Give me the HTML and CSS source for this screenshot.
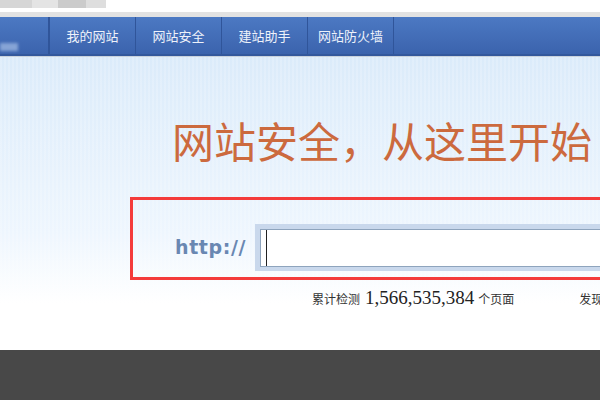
FILE: index.html
```html
<html>
<head>
	<meta charset="utf-8">
	<title>网站安全</title>
	<link rel="stylesheet" href="styles.css">
</head>
<body>
	<div class="top-strip">
		<div class="blur-blocks">
			<span class="bb bb1"></span><span class="bb bb2"></span><span class="bb bb3"></span><span class="bb bb4"></span>
		</div>
	</div>
	<div class="nav">
		<div class="nav-logo"><span class="logo-glow"></span></div>
		<a class="nav-item">我的网站</a>
		<a class="nav-item">网站安全</a>
		<a class="nav-item">建站助手</a>
		<a class="nav-item">网站防火墙</a>
	</div>
	<div class="hero">
		<h1 class="slogan">网站安全，从这里开始</h1>
		<div class="check-box">
			<span class="http-label">http://</span>
			<div class="input-frame">
				<div class="url-input"><span class="caret"></span></div>
			</div>
		</div>
		<div class="stats">
			<span class="stat-text">累计检测</span>
			<span class="stat-num">1,566,535,384</span>
			<span class="stat-text">个页面</span>
			<span class="stat-text found">发现</span>
		</div>
	</div>
	<div class="footer"></div>
</body>
</html>
```

FILE: styles.css
```css
body {
	margin: 0;
	width: 600px;
	overflow: hidden;
	font-family: "Noto Sans CJK SC", sans-serif;
	background: #fff;
}

.top-strip {
	height: 12px;
	background: #fff;
	border-bottom: 5px solid #e2e2e2;
	overflow: hidden;
}

.blur-blocks {
	display: flex;
	height: 8px;
	filter: blur(0.6px);
}

.bb {
	display: block;
	height: 8px;
}
.bb1 { width: 32px; background: #d6d6d6; }
.bb2 { width: 26px; background: #e4e4e4; }
.bb3 { width: 28px; background: #cbcbcb; }
.bb4 { width: 20px; background: #dedede; }

.nav {
	display: flex;
	height: 37px;
	background: linear-gradient(#4c79c3, #3b63ad);
	border-bottom: 2px solid #33589c;
	box-shadow: 0 1px 0 #c9d2dc;
}

.nav-logo {
	width: 48px;
	border-right: 2px solid #30559a;
	overflow: hidden;
}

.logo-glow {
	display: block;
	width: 18px;
	height: 8px;
	margin-top: 26px;
	background: #86a4d6;
	filter: blur(1.5px);
}

.nav-item {
	width: 85px;
	border-right: 1px solid #30559a;
	color: #eef2fa;
	font-size: 13px;
	line-height: 37px;
	text-align: center;
}

.hero {
	height: 293px;
	margin-top: 1px;
	background:
		repeating-linear-gradient(90deg, rgba(255,255,255,0.18) 0 2px, rgba(255,255,255,0) 2px 4px),
		linear-gradient(#dbebfa, #eef6fe 60%, #ffffff 84%);
	overflow: hidden;
}

.slogan {
	margin: 62px 0 0 172px;
	font-size: 42px;
	line-height: 42px;
	font-weight: 400;
	color: #cc6a3e;
	white-space: nowrap;
}

.check-box {
	display: flex;
	align-items: flex-start;
	gap: 9px;
	width: 520px;
	height: 83px;
	margin: 36px 0 0 130px;
	padding: 24px 0 6px 42px;
	box-sizing: border-box;
	border: 3px solid #f43b3b;
	border-right: none;
}

.http-label {
	margin-top: 12px;
	font-family: "DejaVu Sans", sans-serif;
	font-weight: bold;
	font-size: 19px;
	letter-spacing: 0.6px;
	color: #6987b2;
}

.input-frame {
	flex: 1;
	padding: 5px 0 4px 5px;
	background: #c9d8ec;
}

.url-input {
	height: 36px;
	background: #fff;
	border: 1px solid #8ea4bd;
	border-right: none;
	padding-left: 5px;
}

.caret {
	display: block;
	width: 1px;
	height: 36px;
	background: #222;
}

.stats {
	display: flex;
	align-items: baseline;
	margin: 7px 0 0 312px;
	white-space: nowrap;
	color: #333;
}

.stat-text {
	font-size: 12px;
}

.stat-num {
	margin: 0 4px 0 5px;
	font-family: "Liberation Serif", serif;
	font-size: 19px;
	color: #222;
}

.found {
	margin-left: 65px;
}

.footer {
	height: 50px;
	background: #484848;
}
```
